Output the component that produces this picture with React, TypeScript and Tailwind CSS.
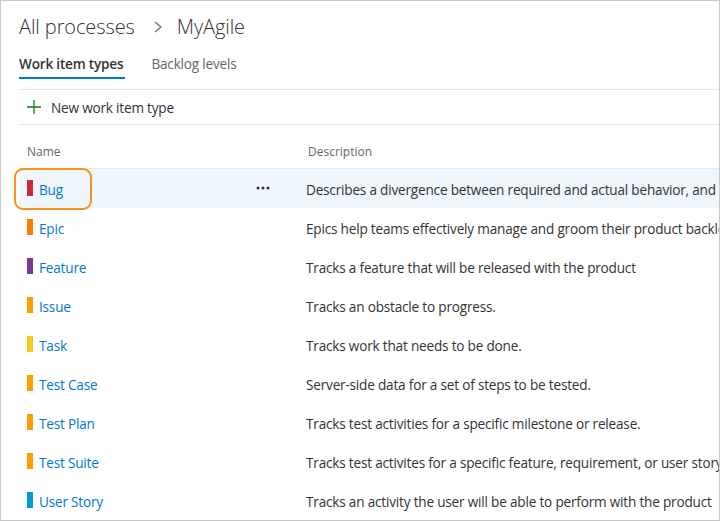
import React from 'react';

type WorkItemType = { name: string; color: string; description: string };

const types: WorkItemType[] = [
  { name: 'Bug', color: 'bg-[#cc293d]', description: 'Describes a divergence between required and actual behavior, and tracks the work done to correct it.' },
  { name: 'Epic', color: 'bg-[#ff7b00]', description: 'Epics help teams effectively manage and groom their product backlog' },
  { name: 'Feature', color: 'bg-[#773b93]', description: 'Tracks a feature that will be released with the product' },
  { name: 'Issue', color: 'bg-[#ff9d00]', description: 'Tracks an obstacle to progress.' },
  { name: 'Task', color: 'bg-[#f2cb1d]', description: 'Tracks work that needs to be done.' },
  { name: 'Test Case', color: 'bg-[#ff9d00]', description: 'Server-side data for a set of steps to be tested.' },
  { name: 'Test Plan', color: 'bg-[#ff9d00]', description: 'Tracks test activities for a specific milestone or release.' },
  { name: 'Test Suite', color: 'bg-[#ff9d00]', description: 'Tracks test activites for a specific feature, requirement, or user story.' },
  { name: 'User Story', color: 'bg-[#009ccc]', description: 'Tracks an activity the user will be able to perform with the product' },
];

function MoreDots() {
  return (
    <svg width="14" height="4" viewBox="0 0 14 4" className="text-[#333]">
      <circle cx="2" cy="2" r="1.5" fill="currentColor" />
      <circle cx="7" cy="2" r="1.5" fill="currentColor" />
      <circle cx="12" cy="2" r="1.5" fill="currentColor" />
    </svg>
  );
}

export default function App() {
  return (
    <div className="w-[720px] h-[521px] bg-white border border-[#c8c8c8] overflow-hidden font-['Open_Sans',sans-serif] text-[#333]">
      {/* breadcrumb title */}
      <div className="h-[50px] flex items-center pl-[18px] pt-[2px] text-[20px] font-light tracking-[-0.1px] text-[#333]">
        <span>All processes</span>
        <svg width="10" height="12" viewBox="0 0 10 12" className="ml-[18px] mr-[14px] text-[#666]">
          <path d="M2 1 L8 6 L2 11" fill="none" stroke="currentColor" strokeWidth="1.2" />
        </svg>
        <span>MyAgile</span>
      </div>

      <div className="ml-[18px]">
        {/* tabs */}
        <div className="flex gap-[28px] h-[28px] text-[13.6px] tracking-[-0.2px]">
          <div className="flex flex-col justify-between">
            <span className="font-semibold text-[#333] leading-[24px] pt-[1px]">Work item types</span>
            <div className="h-[2px] bg-[#0078d4] w-[calc(100%+2px)]" />
          </div>
          <span className="text-[#666] leading-[24px] pt-[1px]">Backlog levels</span>
        </div>

        {/* command bar */}
        <div className="mt-[10px] border-t border-b border-[#e8e8e8] h-[36px] flex items-center pl-[8px] text-[13.6px] tracking-[-0.2px]">
          <svg width="14" height="14" viewBox="0 0 14 14" className="text-[#107c10]">
            <path d="M7 0 V14 M0 7 H14" stroke="currentColor" strokeWidth="1.3" />
          </svg>
          <span className="ml-[10px] pt-[3px] text-[#333]">New work item type</span>
        </div>

        {/* header */}
        <div className="flex h-[44px] border-b border-[#eaeaea] text-[12px] text-[#666] pt-[19px]">
          <div className="w-[289px] pl-[8px] leading-[16px]">Name</div>
          <div className="leading-[16px]">Description</div>
        </div>

        {/* rows */}
        {types.map((t, i) => (
          <div
            key={t.name}
            className={`relative flex items-center h-[39px] text-[13.6px] tracking-[-0.2px] ${i === 0 ? 'bg-[#eff6fc]' : ''}`}
          >
            {i === 0 && (
              <div className="absolute left-[-5px] top-[-1px] w-[78px] h-[42px] border-[2px] border-[#f7901e] rounded-[9px]" />
            )}
            <div className="w-[287px] shrink-0 flex items-center pl-[8px] pr-[36px]">
              <span className={`w-[6px] h-[16px] ${t.color}`} />
              <span className="ml-[6px] pt-[4px] text-[#0078d4]">{t.name}</span>
              {i === 0 && (
                <span className="ml-auto">
                  <MoreDots />
                </span>
              )}
            </div>
            <div className="whitespace-nowrap pt-[4px] text-[#333]">{t.description}</div>
          </div>
        ))}
      </div>
    </div>
  );
}
